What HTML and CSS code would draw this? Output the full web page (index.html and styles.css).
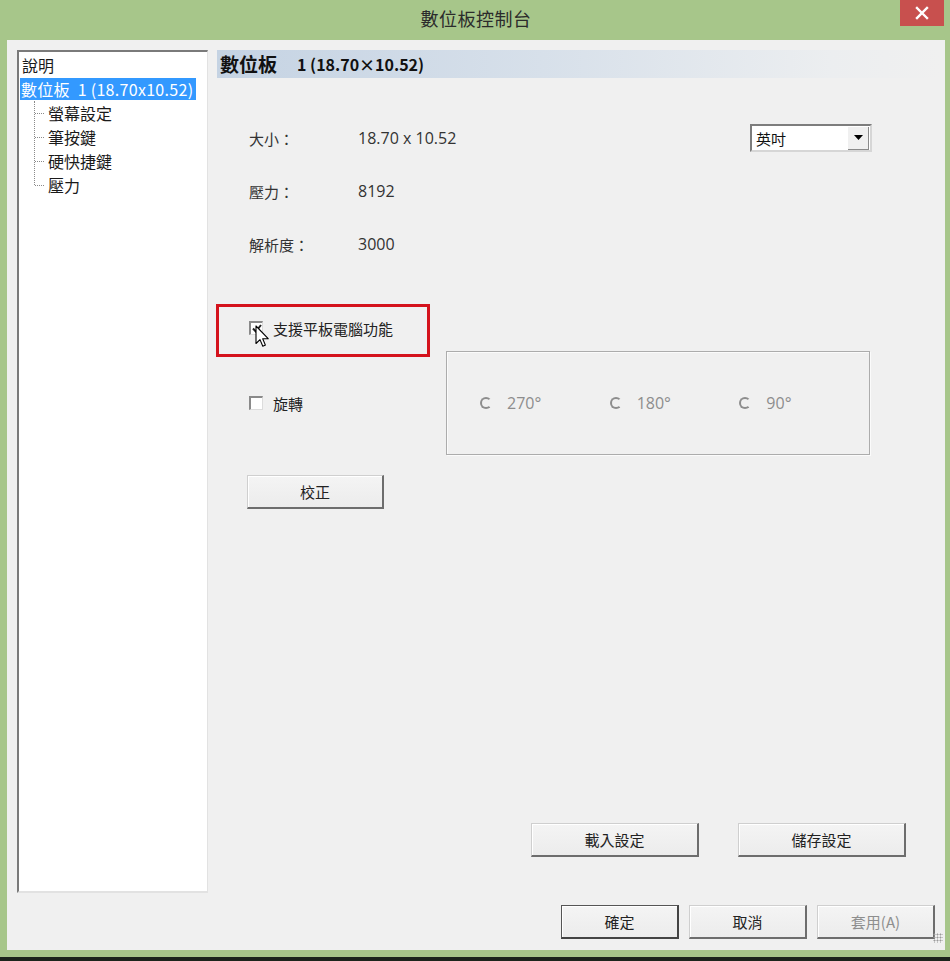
FILE: index.html
```html
<!DOCTYPE html>
<html lang="zh-Hant">
<head>
<meta charset="utf-8">
<title>數位板控制台</title>
<link rel="stylesheet" href="styles.css">
</head>
<body>
<div class="window">
  <div class="titlebar">
    <span class="title">數位板控制台</span>
    <span class="close">
      <svg width="14" height="14" viewBox="0 0 14 14"><path d="M2 2L12 12M12 2L2 12" stroke="#fff" stroke-width="2.4" stroke-linecap="square"/></svg>
    </span>
  </div>
  <div class="client">
    <div class="main">
      <div class="tree">
        <div class="node">說明</div>
        <div class="node"><span class="sel">數位板&nbsp; 1 (18.70x10.52)</span></div>
        <div class="children">
          <div class="node child">螢幕設定</div>
          <div class="node child">筆按鍵</div>
          <div class="node child">硬快捷鍵</div>
          <div class="node child last">壓力</div>
        </div>
      </div>
      <div class="panel">
        <div class="header"><span class="hd-cjk">數位板</span><span class="hd-num">1 (18.70×10.52)</span></div>
        <div class="info">
          <div class="row">
            <span class="label">大小：</span><span class="value">18.70 x 10.52</span>
            <div class="combo"><span class="combo-text">英吋</span><span class="combo-btn"><svg width="9" height="5" viewBox="0 0 9 5"><path d="M0 0H9L4.5 5Z" fill="#000"/></svg></span></div>
          </div>
          <div class="row"><span class="label">壓力：</span><span class="value">8192</span></div>
          <div class="row"><span class="label">解析度：</span><span class="value">3000</span></div>
        </div>
        <div class="opts">
          <div class="opts-left">
            <div class="highlight">
              <label class="check"><span class="box checked"><svg width="10" height="9" viewBox="0 0 10 9"><path d="M1 4.5L3.8 7.5L9 1" stroke="#222" stroke-width="2" fill="none"/></svg></span>支援平板電腦功能</label>
            </div>
            <label class="check rotate"><span class="box"></span>旋轉</label>
          </div>
          <div class="group">
            <span class="radio"><span class="dot"></span>270°</span>
            <span class="radio"><span class="dot"></span>180°</span>
            <span class="radio"><span class="dot"></span>90°</span>
          </div>
        </div>
        <button class="btn calib">校正</button>
        <div class="io">
          <button class="btn io-btn">載入設定</button>
          <button class="btn io-btn">儲存設定</button>
        </div>
      </div>
    </div>
    <div class="footer">
      <button class="btn foot-btn default">確定</button>
      <button class="btn foot-btn">取消</button>
      <button class="btn foot-btn disabled">套用(A)</button>
      <span class="grip"></span>
    </div>
  </div>
  <svg class="cursor" width="15" height="24" viewBox="0 0 15 24"><path d="M1 1V18.5L5 14.6L7.8 21.2L10.4 20.1L7.7 13.7H13.2Z" fill="#fff" stroke="#000" stroke-width="1.1" stroke-linejoin="round"/></svg>
</div>
<div class="taskbar"></div>
</body>
</html>
```
FILE: styles.css
```css
html, body {
  margin: 0;
  padding: 0;
}
body {
  width: 950px;
  height: 961px;
  background: #1c241c;
  font-family: "Noto Sans CJK TC", "Noto Sans", sans-serif;
  font-size: 15px;
  color: #222;
  overflow: hidden;
}
.window {
  position: relative;
  height: 957px;
  box-sizing: border-box;
  background: #a7c68a;
  padding: 0 5px 7px 7px;
  display: flex;
  flex-direction: column;
}
.taskbar {
  height: 4px;
  background: #1c241c;
}
.titlebar {
  position: relative;
  height: 40px;
  display: flex;
  align-items: center;
  justify-content: center;
}
.title {
  font-size: 18px;
  color: #2b2b2b;
  margin-top: -4px;
  letter-spacing: 0.5px;
}
.close {
  position: absolute;
  right: 1px;
  top: 0;
  width: 44px;
  height: 26px;
  background: #c8504e;
  display: flex;
  align-items: center;
  justify-content: center;
}
.client {
  flex: 1;
  background: #f0f0f0;
  display: flex;
  flex-direction: column;
}
.main {
  display: flex;
  height: 843px;
  margin-top: 10px;
}
.tree {
  width: 191px;
  box-sizing: border-box;
  margin-left: 10px;
  background: #fff;
  border-top: 2px solid #7a7a7a;
  border-left: 2px solid #7a7a7a;
  border-right: 1px solid #e2e2e2;
  border-bottom: 2px solid #e2e2e2;
  padding: 1px 0 0 1px;
}
.node {
  height: 24px;
  line-height: 24px;
  padding-left: 2px;
  white-space: nowrap;
  font-size: 16px;
  color: #1a1a1a;
}
.sel {
  display: inline-block;
  background: #3399ff;
  color: #fff;
  line-height: 22px;
  padding: 0 3px 0 1px;
  margin-left: -2px;
  letter-spacing: 0.3px;
}
.children {
  position: relative;
  margin-left: 14px;
}
.children::before {
  content: "";
  position: absolute;
  left: 0;
  top: 0;
  height: 84px;
  border-left: 1px dotted #8a8a8a;
}
.child {
  position: relative;
  padding-left: 14px;
}
.child::before {
  content: "";
  position: absolute;
  left: 1px;
  top: 12px;
  width: 9px;
  border-top: 1px dotted #8a8a8a;
}
.panel {
  flex: 1;
  margin-left: 9px;
  margin-right: 5px;
  display: flex;
  flex-direction: column;
}
.header {
  height: 28px;
  line-height: 28px;
  padding-left: 3px;
  font-weight: bold;
  color: #111;
  display: flex;
  align-items: center;
  background: linear-gradient(to right, #c5d3e3 0%, #d7e0ea 45%, #eceef0 85%, #f0f0f0 100%);
}
.hd-cjk {
  font-size: 19px;
}
.hd-num {
  font-size: 16px;
  margin-left: 20px;
}
.info {
  margin-top: 46px;
  display: flex;
  flex-direction: column;
  gap: 25px;
}
.row {
  height: 28px;
  display: flex;
  align-items: center;
  padding-left: 32px;
  color: #333;
}
.label {
  width: 109px;
}
.value {
  font-family: "Open Sans", "Noto Sans", sans-serif;
  font-size: 16px;
  color: #333;
}
.combo {
  margin-left: auto;
  margin-right: 68px;
  width: 122px;
  height: 28px;
  box-sizing: border-box;
  background: #fff;
  border-top: 2px solid #7d7d7d;
  border-left: 2px solid #7d7d7d;
  border-right: 2px solid #d6d6d6;
  border-bottom: 2px solid #d6d6d6;
  display: flex;
  align-items: center;
}
.combo-text {
  flex: 1;
  padding-left: 4px;
  font-size: 15px;
  color: #111;
}
.combo-btn {
  width: 20px;
  height: 22px;
  background: #f0f0f0;
  border-right: 1px solid #8a8a8a;
  border-bottom: 1px solid #8a8a8a;
  display: flex;
  align-items: center;
  justify-content: center;
  margin-right: 1px;
}
.opts {
  display: flex;
  align-items: flex-start;
  margin-top: 46px;
}
.opts-left {
  width: 229px;
  display: flex;
  flex-direction: column;
}
.highlight {
  width: 214px;
  height: 53px;
  box-sizing: border-box;
  margin-left: -1px;
  border: 3px solid #d4121c;
  padding: 11px 0 0 30px;
}
.check {
  display: flex;
  align-items: center;
  height: 20px;
  font-size: 15px;
  color: #222;
}
.box {
  width: 14px;
  height: 14px;
  box-sizing: border-box;
  background: #fff;
  border-top: 2px solid #8a8a8a;
  border-left: 2px solid #8a8a8a;
  border-right: 1px solid #dcdcdc;
  border-bottom: 1px solid #dcdcdc;
  margin-right: 10px;
  display: flex;
  align-items: center;
  justify-content: center;
}
.rotate {
  margin-top: 36px;
  padding-left: 32px;
}
.group {
  width: 424px;
  height: 104px;
  box-sizing: border-box;
  margin-top: 47px;
  border: 1px solid #acacac;
  box-shadow: inset 1px 1px 0 #fbfbfb, 1px 1px 0 #fbfbfb;
  display: flex;
  align-items: center;
  padding-left: 33px;
}
.radio {
  width: 140px;
  display: flex;
  align-items: center;
  color: #8d8d8d;
  font-family: "Open Sans", "Noto Sans", sans-serif;
  font-size: 16px;
}
.dot {
  width: 12px;
  height: 12px;
  box-sizing: border-box;
  border-radius: 50%;
  border: 2px solid #8d8d8d;
  border-right-color: #f0f0f0;
  margin-right: 15px;
}
.btn {
  font-family: "Noto Sans CJK TC", "Noto Sans", sans-serif;
  font-size: 15px;
  color: #222;
  background: linear-gradient(#f4f4f4, #ececec);
  border-top: 1px solid #cfcfcf;
  border-left: 1px solid #cfcfcf;
  border-right: 2px solid #6d6d6d;
  border-bottom: 2px solid #6d6d6d;
  box-shadow: inset 1px 1px 0 #fff;
  padding: 0;
  box-sizing: border-box;
  height: 34px;
}
.calib {
  margin-top: 20px;
  margin-left: 30px;
  width: 137px;
  align-self: flex-start;
}
.io {
  margin-top: auto;
  margin-bottom: 36px;
  display: flex;
  justify-content: flex-end;
  gap: 39px;
  padding-right: 34px;
}
.io-btn {
  width: 168px;
}
.footer {
  position: relative;
  margin-top: 12px;
  display: flex;
  justify-content: flex-end;
  gap: 10px;
  padding-right: 10px;
}
.foot-btn {
  width: 118px;
}
.default {
  border-top: 1px solid #555;
  border-left: 1px solid #555;
  border-right: 2px solid #444;
  border-bottom: 2px solid #444;
}
.disabled {
  color: #8e8e8e;
}
.grip {
  position: absolute;
  right: 2px;
  top: 28px;
  width: 10px;
  height: 10px;
  background-image: radial-gradient(circle, #9a9a9a 0.8px, transparent 1.2px);
  background-size: 3px 3px;
}
.cursor {
  position: absolute;
  left: 255px;
  top: 325px;
}
```
